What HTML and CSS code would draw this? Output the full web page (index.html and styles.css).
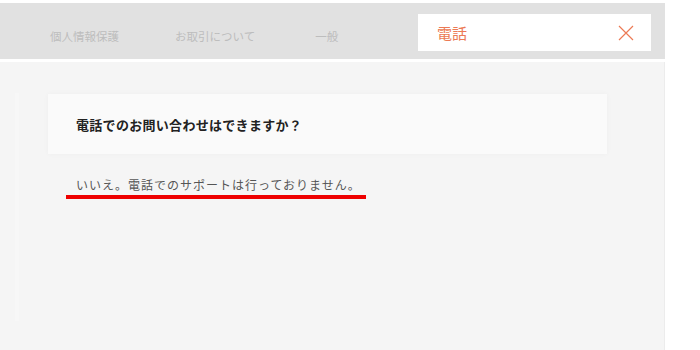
FILE: index.html
```html
<!DOCTYPE html>
<html lang="ja">
<head>
<meta charset="UTF-8">
<title>よくあるご質問</title>
<link rel="stylesheet" href="styles.css">
</head>
<body>
<div class="page">
  <div class="tabs">
    <ul class="nav">
      <li>個人情報保護</li>
      <li>お取引について</li>
      <li>一般</li>
    </ul>
    <div class="tab-active">
      <span>電話</span>
      <svg class="close" width="16" height="16" viewBox="0 0 16 16">
        <path d="M1 1L15 15M15 1L1 15" stroke="#ec7a55" stroke-width="1.2" fill="none"/>
      </svg>
    </div>
  </div>
  <div class="content">
    <div class="panel">
      <div class="question">電話でのお問い合わせはできますか？</div>
      <p class="answer">いいえ。電話でのサポートは行っておりません。</p>
      <div class="mark"></div>
    </div>
  </div>
</div>
</body>
</html>
```
FILE: styles.css
```css
html,body{margin:0;padding:0;background:#fff;}
body{font-family:"Noto Sans CJK JP","Noto Sans",sans-serif;}

.page{width:665px;padding-top:3px;}

.tabs{height:56px;background:#e1e1e1;display:flex;align-items:flex-start;}
.nav{list-style:none;margin:0;padding:0 0 0 50px;display:flex;height:56px;align-items:center;}
.nav li{font-size:11.5px;color:#bdbdbd;margin-right:56px;padding-top:10px;}
.nav li:nth-child(2){margin-right:60px;}

.tab-active{margin:11px 14px 0 auto;width:233px;height:37px;background:#fff;display:flex;align-items:center;justify-content:space-between;box-sizing:border-box;padding:0 17px 0 19px;}
.tab-active span{font-size:15px;color:#ec7a55;}

.content{margin-top:3px;background:#f5f5f5;height:288px;border-right:1px solid #ececec;padding:31px 0 0 15px;box-sizing:border-box;}

.panel{border-left:4px solid #f7f7f7;height:227px;padding:1px 0 0 29px;}

.question{width:559px;height:60px;background:#fafafa;box-shadow:0 0 6px rgba(0,0,0,.03);display:flex;align-items:center;padding-left:28px;box-sizing:border-box;font-size:13px;font-weight:bold;color:#222;letter-spacing:.3px;}

.answer{margin:21px 0 0 28px;font-size:12px;line-height:20px;color:#555;letter-spacing:1px;}
.mark{width:300px;height:4px;background:#ee0000;margin:0 0 0 18px;}
```
